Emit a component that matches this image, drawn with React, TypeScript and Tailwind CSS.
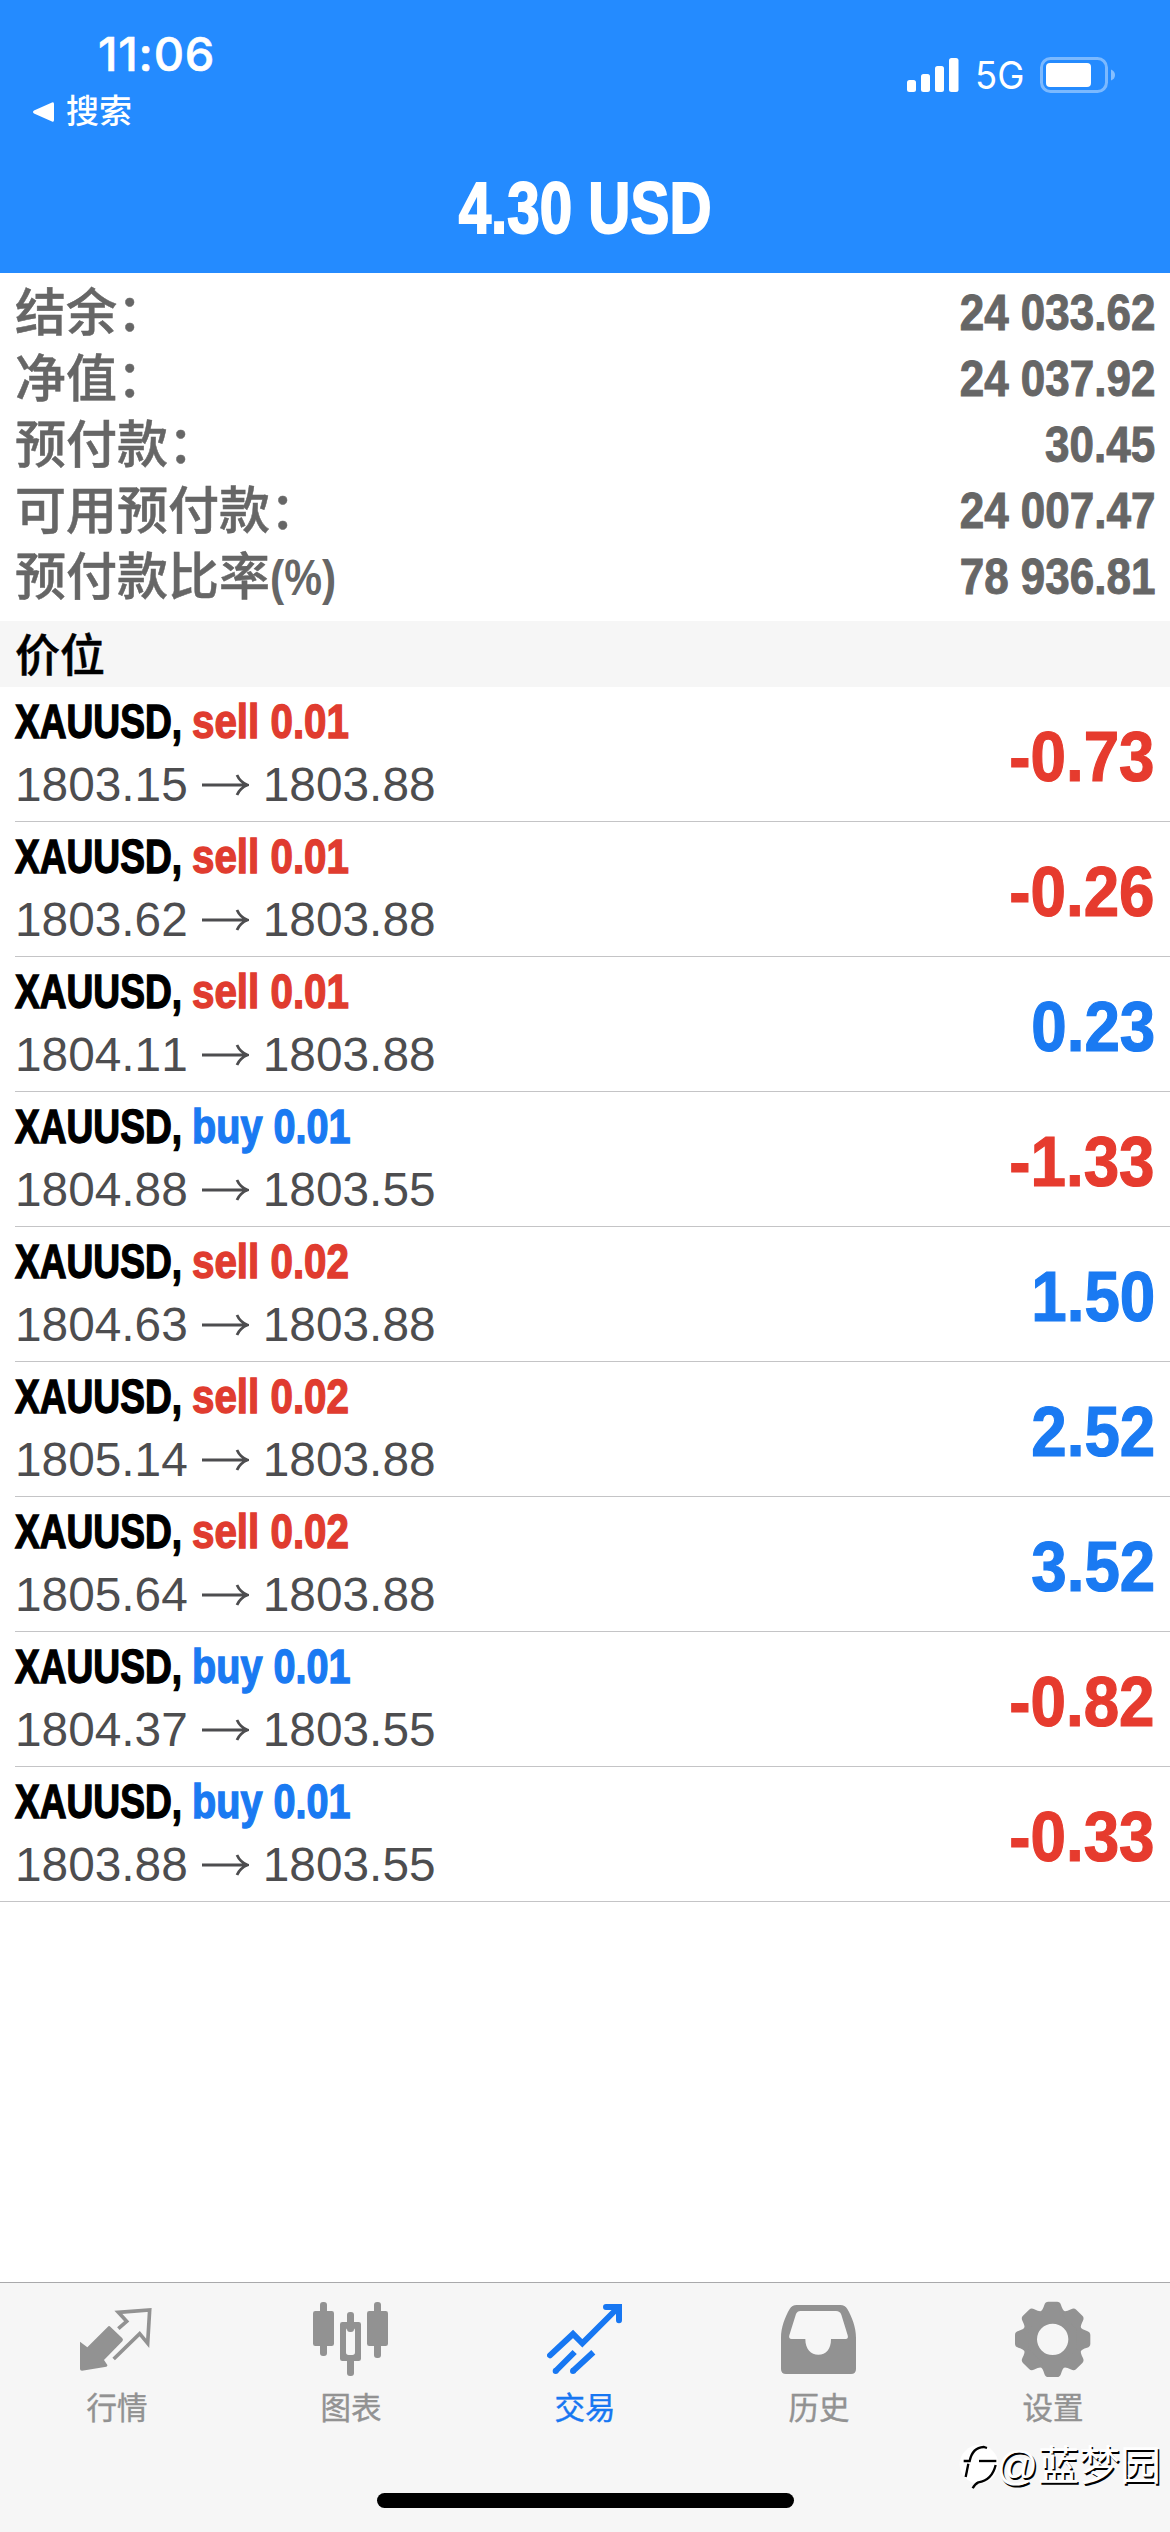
import type { ReactNode } from 'react';
import clsx from 'clsx';

interface Position {
  side: 'sell' | 'buy';
  volume: string;
  open: string;
  current: string;
  profit: string;
}

const account = [
  { label: '结余：', value: '24 033.62' },
  { label: '净值：', value: '24 037.92' },
  { label: '预付款：', value: '30.45' },
  { label: '可用预付款：', value: '24 007.47' },
  { label: '预付款比率', unit: '(%)', value: '78 936.81' },
];

const positions: Position[] = [
  { side: 'sell', volume: '0.01', open: '1803.15', current: '1803.88', profit: '-0.73' },
  { side: 'sell', volume: '0.01', open: '1803.62', current: '1803.88', profit: '-0.26' },
  { side: 'sell', volume: '0.01', open: '1804.11', current: '1803.88', profit: '0.23' },
  { side: 'buy', volume: '0.01', open: '1804.88', current: '1803.55', profit: '-1.33' },
  { side: 'sell', volume: '0.02', open: '1804.63', current: '1803.88', profit: '1.50' },
  { side: 'sell', volume: '0.02', open: '1805.14', current: '1803.88', profit: '2.52' },
  { side: 'sell', volume: '0.02', open: '1805.64', current: '1803.88', profit: '3.52' },
  { side: 'buy', volume: '0.01', open: '1804.37', current: '1803.55', profit: '-0.82' },
  { side: 'buy', volume: '0.01', open: '1803.88', current: '1803.55', profit: '-0.33' },
];

function StatusBar() {
  return (
    <div className="flex h-[140px] justify-between text-white">
      <div className="pt-[24px] pl-[32px]">
        <div className="pl-[66px] font-['Inter',sans-serif] text-[47px] leading-[60px] font-medium tracking-[0.8px] [-webkit-text-stroke:0.6px_currentColor]">
          11:06
        </div>
        <div className="flex h-[54px] items-center gap-[12px] pt-[2px]">
          <svg width="22" height="22" viewBox="0 0 22 22" fill="currentColor">
            <path d="M20 1.5Q22 .5 22 3V19Q22 21.500 20 20.500L2 12.500Q0 11 2 9.500Z" />
          </svg>
          <span className="text-[33px] font-medium">搜索</span>
        </div>
      </div>
      <div className="flex h-[150px] items-center pr-[54px]">
        <svg width="52" height="36" viewBox="0 0 52 36" fill="currentColor">
          <rect x="0" y="23" width="9" height="12" rx="2.500" />
          <rect x="14" y="17" width="9" height="18" rx="2.500" />
          <rect x="28" y="9" width="9" height="26" rx="2.500" />
          <rect x="42" y="1" width="9.500" height="34" rx="2.500" />
        </svg>
        <span className="ml-[16px] w-[49px] origin-left scale-x-[0.96] font-['Inter',sans-serif] text-[38px] leading-none whitespace-nowrap">
          5G
        </span>
        <svg className="ml-[16px]" width="76" height="36" viewBox="0 0 76 36">
          <rect x="1.500" y="1.500" width="65" height="33" rx="9" fill="none" stroke="#fff" strokeOpacity="0.4" strokeWidth="3" />
          <rect x="6" y="6" width="45" height="24" rx="4" fill="#fff" />
          <path d="M71 12.500Q75 14 75 18T71 23.500Z" fill="#fff" fillOpacity="0.45" />
        </svg>
      </div>
    </div>
  );
}

function PositionRow({ position, last }: { position: Position; last: boolean }) {
  const { side, volume, open, current, profit } = position;
  return (
    <div className={clsx('h-[135px]', !last && 'pl-[15px]')}>
      <div
        className={clsx(
          'flex h-full items-center justify-between border-b border-[#c4c4c6] pr-[15px]',
          last && 'pl-[15px]'
        )}
      >
        <div>
          <div className="-mt-px flex text-[48px] leading-[62px] font-bold whitespace-nowrap [-webkit-text-stroke:1.4px_currentColor]">
            <span className="w-[177px] origin-left scale-x-[0.773] text-black">XAUUSD,</span>
            <span
              className={clsx(
                'origin-left',
                side === 'sell' ? 'scale-x-[0.84] text-[#e03c2f]' : 'scale-x-[0.825] text-[#1a7af2]'
              )}
            >
              {side} {volume}
            </span>
          </div>
          <div className="mt-px flex items-center text-[47.800px] leading-[62px] text-[#4d4d4f] [font-kerning:none]">
            <span>{open}</span>
            <svg className="mx-[14px]" width="47" height="24" viewBox="0 0 47 24" fill="none" stroke="currentColor" strokeWidth="2.800">
              <path d="M0 12H45M35 2Q38 9 45.500 12Q38 15 35 22" />
            </svg>
            <span>{current}</span>
          </div>
        </div>
        <span
          className={clsx(
            'mt-[5px] origin-right scale-x-[0.91] text-[70px] leading-none font-bold [font-kerning:none] [-webkit-text-stroke:1.2px_currentColor]',
            profit.startsWith('-') ? 'text-[#e63b2e]' : 'text-[#1a7af2]'
          )}
        >
          {profit}
        </span>
      </div>
    </div>
  );
}

function QuotesIcon() {
  return (
    <>
      <path d="M3 122L25 139L86 78Q90 73 94 77L130 112Q134 117 130 121L75 177L85 192Q86 196 82 197L9 209Q3 209 3 204Z" fill="currentColor" />
      <path d="M118 83L143 61L118 34L212 27L206 127L182 98L104 174" fill="none" stroke="currentColor" strokeWidth="11" />
    </>
  );
}

function ChartIcon() {
  return (
    <g fill="currentColor">
      <rect x="21" y="3" width="21" height="162" rx="9" />
      <rect x="0" y="30" width="63" height="105" rx="7" />
      <rect x="102" y="33" width="21" height="60" rx="9" />
      <rect x="102" y="165" width="21" height="60" rx="9" />
      <path fillRule="evenodd" d="M88 63H137Q144 63 144 70V173Q144 180 137 180H88Q81 180 81 173V70Q81 63 88 63ZM107 81Q99 81 99 89V154Q99 162 107 162H118Q126 162 126 154V89Q126 81 118 81Z" />
      <rect x="183" y="3" width="21" height="168" rx="9" />
      <rect x="162" y="30" width="63" height="105" rx="7" />
    </g>
  );
}

function TradeIcon() {
  return (
    <g fill="none" stroke="currentColor" strokeWidth="18">
      <path d="M9 163L78 99L106 127L212 21" strokeLinecap="round" />
      <path d="M177 18H216V58" strokeLinecap="round" />
      <path d="M26 210L83 153M78 210L139 154" />
      <circle cx="26" cy="210" r="4.500" strokeWidth="9" />
      <circle cx="78" cy="210" r="4.500" strokeWidth="9" />
    </g>
  );
}

function HistoryIcon() {
  return (
    <path
      fill="currentColor"
      fillRule="evenodd"
      d="M47 12H178Q192 12 199 24C213 48 225 80 225 110V204Q225 219 210 219H15Q0 219 0 204V110C0 80 12 48 26 24Q33 12 47 12ZM58 30Q49 30 45 39L25 103Q22 114 32 114H73C73 145 90 161 112 161C135 161 150 145 150 114H194Q203 114 200 103L181 41Q177 30 165 30Z"
    />
  );
}

function SettingsIcon() {
  return (
    <g transform="translate(113 115)" fill="currentColor">
      <circle r="67.500" fill="none" stroke="currentColor" strokeWidth="41" />
      {[0, 45, 90, 135, 180, 225, 270, 315].map((angle) => (
        <path
          key={angle}
          transform={`rotate(${angle})`}
          d="M-36 -84Q-30 -87 -25 -103Q-22 -113 -13 -113H13Q22 -113 25 -103Q30 -87 36 -84L30 -72H-30Z"
        />
      ))}
    </g>
  );
}

const tabs: { label: string; icon: ReactNode; active?: boolean }[] = [
  { label: '行情', icon: <QuotesIcon /> },
  { label: '图表', icon: <ChartIcon /> },
  { label: '交易', icon: <TradeIcon />, active: true },
  { label: '历史', icon: <HistoryIcon /> },
  { label: '设置', icon: <SettingsIcon /> },
];

function Watermark() {
  return (
    <div className="absolute right-[9px] bottom-[41px] flex items-center">
      <svg className="-mr-[7px]" width="46" height="50" viewBox="0 0 138 150">
        <circle cx="66" cy="70" r="58" fill="#fff" />
        <g fill="none" stroke="#000" strokeWidth="7">
          <path d="M20 60H38Q46 20 80 18L90 21" />
          <path d="M66 60H118" />
          <path d="M34 68L26 108" />
          <path d="M116 72C108 105 92 120 64 124Q54 128 47 142" />
        </g>
      </svg>
      <span className="text-[41px] leading-[50px] text-white [text-shadow:1.500px_1.500px_0_#000]">
        @蓝梦园
      </span>
    </div>
  );
}

export default function App() {
  return (
    <div className="relative flex h-[2532px] w-[1170px] flex-col overflow-hidden bg-white font-['Liberation_Sans','Noto_Sans_CJK_SC',sans-serif]">
      <header className="h-[273px] bg-[#248bff]">
        <StatusBar />
        <h1 className="flex h-[136px] justify-center text-[72px] leading-[136px] font-bold text-white">
          <span className="scale-x-[0.81] whitespace-nowrap [-webkit-text-stroke:2px_currentColor]">4.30 USD</span>
        </h1>
      </header>

      {/* Account summary */}
      <section className="h-[348px] px-[15px] pt-[6px] text-[#666]">
        {account.map((row) => (
          <div key={row.label} className="flex h-[66px] items-center justify-between">
            <span className="flex pt-[3px] text-[51px] leading-[66px] font-medium [-webkit-text-stroke:0.5px_currentColor]">
              {row.label}
              {row.unit && <span className="origin-left scale-x-[0.85] text-[50px] font-bold [-webkit-text-stroke:0px]">{row.unit}</span>}
            </span>
            <span className="mt-px origin-right scale-x-[0.88] text-[50px] leading-[66px] font-bold [font-kerning:none] [-webkit-text-stroke:1px_currentColor]">
              {row.value}
            </span>
          </div>
        ))}
      </section>

      <div className="flex h-[66px] items-center bg-[#f6f6f6] px-[15px] pb-[4px] font-['Noto_Sans_CJK_SC',sans-serif] text-[45px] leading-none font-medium text-black [-webkit-text-stroke:0.5px_currentColor]">
        价位
      </div>

      {/* Open positions */}
      <main className="flex-1">
        {positions.map((position, i) => (
          <PositionRow key={i} position={position} last={i === positions.length - 1} />
        ))}
      </main>

      <nav className="flex h-[250px] flex-col items-center justify-between border-t border-[#a9a9ab] bg-[#f6f6f6] pb-[24px]">
        <div className="grid w-full grid-cols-5">
          {tabs.map((tab) => (
            <div
              key={tab.label}
              className={clsx(
                'flex flex-col items-center pt-[18px]',
                tab.active ? 'text-[#1777f2]' : 'text-[#929292]'
              )}
            >
              <svg width="76" height="76" viewBox="0 0 228 228">
                {tab.icon}
              </svg>
              <span className="mt-[9px] text-[30.500px] leading-[44px] [-webkit-text-stroke:0.4px_currentColor]">{tab.label}</span>
            </div>
          ))}
        </div>
        <div className="h-[15px] w-[417px] rounded-full bg-black" />
      </nav>

      <Watermark />
    </div>
  );
}
